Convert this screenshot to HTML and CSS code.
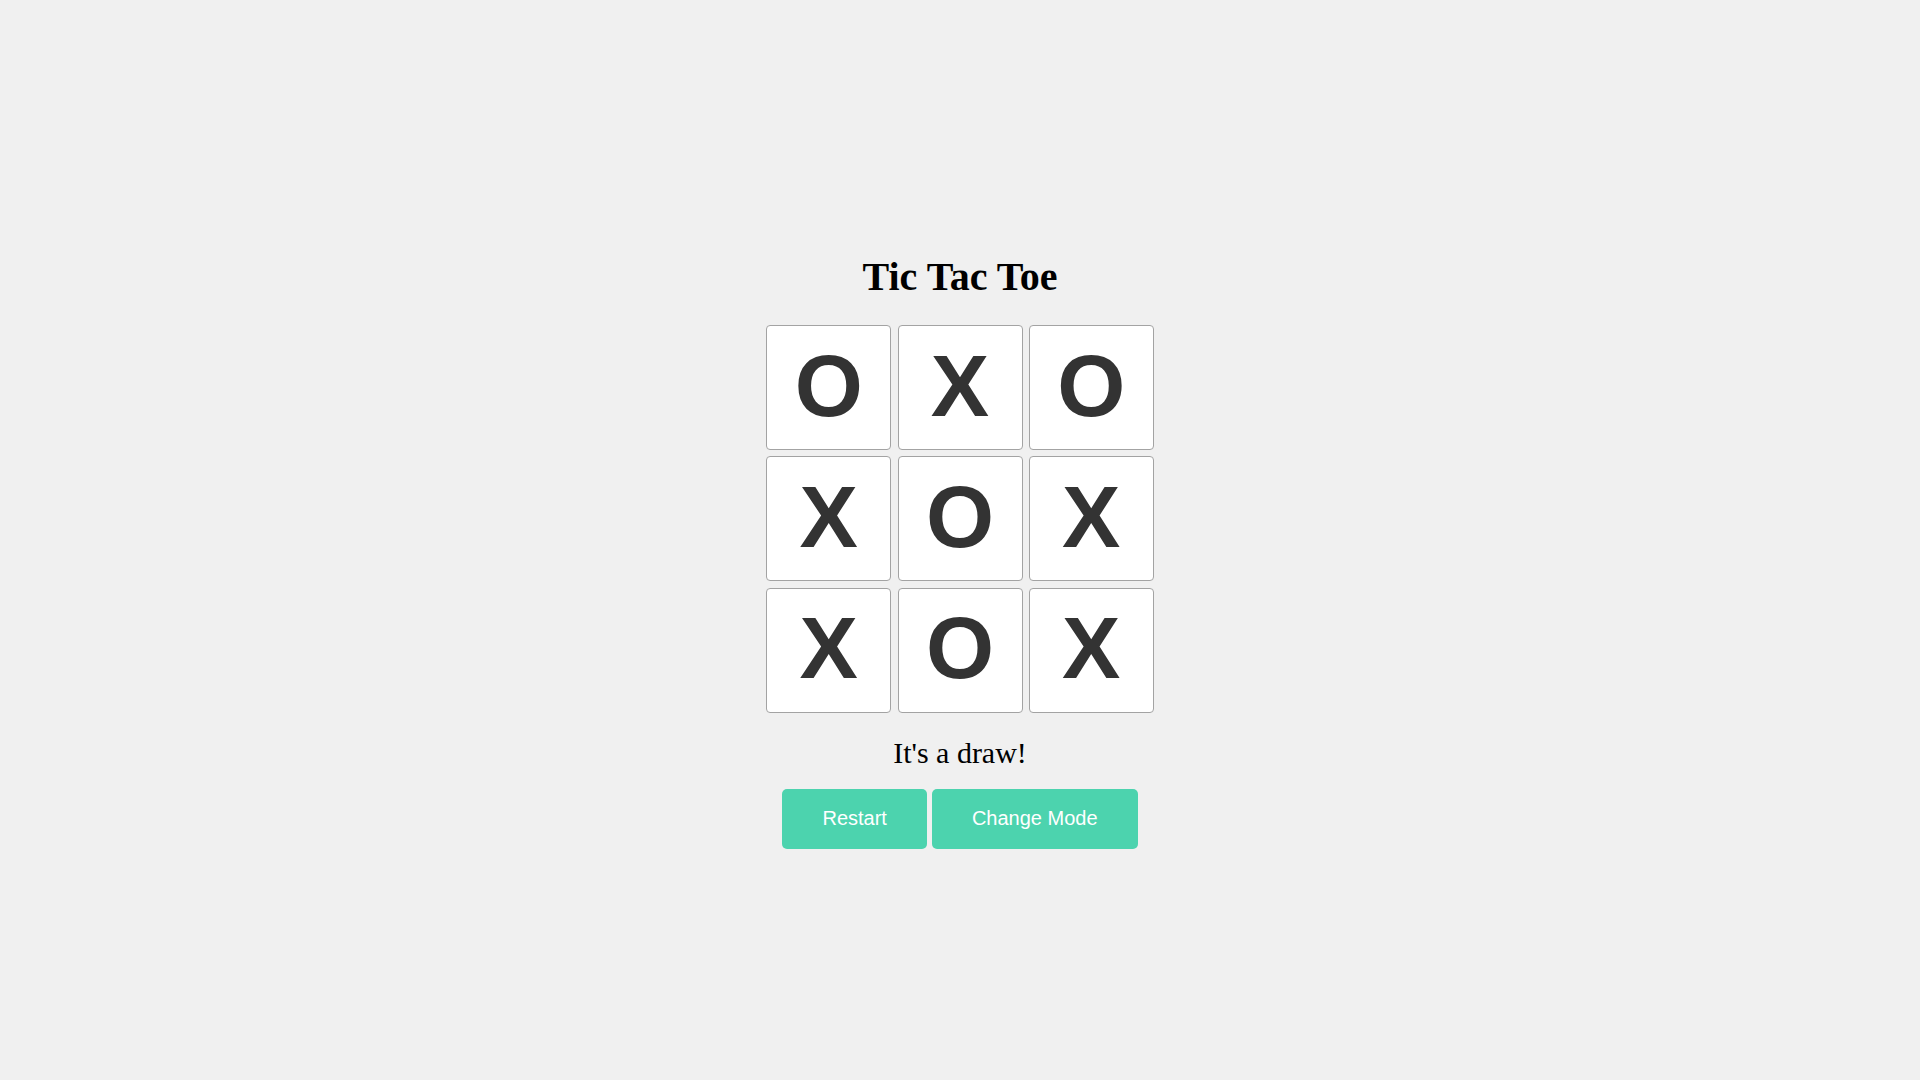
FILE: index.html
```html
<!DOCTYPE html>
<html lang="en">
<head>
<meta charset="utf-8">
<title>Tic Tac Toe</title>
<link rel="stylesheet" href="styles.css">
</head>
<body>
<main class="game">
  <h1 class="title">Tic Tac Toe</h1>
  <div class="board">
    <div class="cell">O</div>
    <div class="cell">X</div>
    <div class="cell">O</div>
    <div class="cell">X</div>
    <div class="cell">O</div>
    <div class="cell">X</div>
    <div class="cell">X</div>
    <div class="cell">O</div>
    <div class="cell">X</div>
  </div>
  <p class="status">It's a draw!</p>
  <div class="controls">
    <button class="btn btn-restart">Restart</button>
    <button class="btn btn-mode">Change Mode</button>
  </div>
</main>
</body>
</html>
```
FILE: styles.css
```css
html, body {
  margin: 0;
  padding: 0;
}

body {
  background: #f0f0f0;
  font-family: "Liberation Serif", "Times New Roman", serif;
  color: #000;
  min-height: 100vh;
}

.game {
  display: flex;
  flex-direction: column;
  align-items: center;
  padding-top: 254px;
}

.title {
  margin: 0;
  font-size: 40px;
  line-height: 46px;
  font-weight: bold;
}

.board {
  margin-top: 25px;
  display: grid;
  grid-template-columns: repeat(3, 125px);
  grid-auto-rows: 125px;
  gap: 6.25px;
}

.cell {
  box-sizing: border-box;
  background: #fff;
  border: 1px solid #a3a3a3;
  border-radius: 4px;
  display: flex;
  align-items: center;
  justify-content: center;
  font-family: "Liberation Sans", Arial, sans-serif;
  font-weight: bold;
  font-size: 87.5px;
  color: #333;
  padding-bottom: 3px;
}

.status {
  margin: 23px 0 0;
  font-size: 30px;
  line-height: 34.5px;
}

.controls {
  margin-top: 18.5px;
  display: flex;
  gap: 5px;
}

.btn {
  box-sizing: border-box;
  height: 60px;
  padding: 0 40px;
  border: none;
  border-radius: 5px;
  background: #4cd3ae;
  color: #fff;
  font-family: "Liberation Sans", Arial, sans-serif;
  font-size: 20px;
  cursor: pointer;
}
```
